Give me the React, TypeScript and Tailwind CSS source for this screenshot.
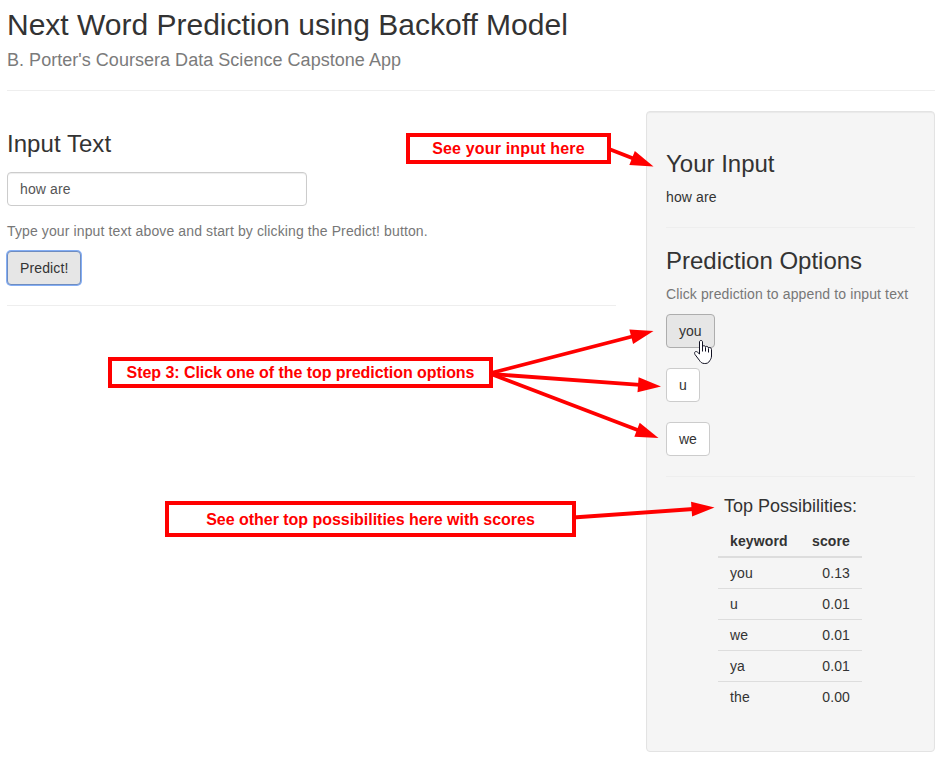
import { useState } from "react";

const rows = [
  ["you", "0.13"],
  ["u", "0.01"],
  ["we", "0.01"],
  ["ya", "0.01"],
  ["the", "0.00"],
];

function PredictionButton({ label, active }: { label: string; active?: boolean }) {
  return (
    <button
      className={
        "block h-[34px] rounded border px-3 text-sm leading-5 tracking-normal text-[#333] " +
        (active ? "border-[#adadad] bg-[#e6e6e6]" : "border-[#ccc] bg-white")
      }
    >
      {label}
    </button>
  );
}

function Arrow({ from, to, head = 23 }: { from: [number, number]; to: [number, number]; head?: number }) {
  const dx = to[0] - from[0];
  const dy = to[1] - from[1];
  const len = Math.hypot(dx, dy);
  const angle = (Math.atan2(dy, dx) * 180) / Math.PI;
  return (
    <g transform={`translate(${from[0]} ${from[1]}) rotate(${angle})`}>
      <path d={`M0 0H${len - head + 2}`} stroke="#f00" strokeWidth="3.8" />
      <path d={`M${len} 0L${len - head} -7.5V7.5Z`} fill="#f00" />
    </g>
  );
}

const callout =
  "absolute flex items-center justify-center border-4 border-[#f00] bg-white font-bold text-[#f00] text-base leading-5 whitespace-nowrap";

export default function App() {
  const [text, setText] = useState("how are");
  return (
    <div className="relative h-[774px] w-[943px] overflow-hidden bg-white pl-[7px] pr-2 pt-2 font-['Liberation_Sans',Arial,sans-serif] text-sm leading-5 tracking-[0.12px] text-[#333]">
      <h2 className="text-[30px] leading-[33px] tracking-normal">Next Word Prediction using Backoff Model</h2>
      <h4 className="mt-[9px] text-lg leading-5 tracking-[0.03px] text-[#7b7b7b]">
        B. Porter's Coursera Data Science Capstone App
      </h4>
      <hr className="mt-5 border-[#eee]" />

      <div className="mt-5 flex gap-[30px]">
        <main className="w-[609px] pt-5">
          <h3 className="text-2xl leading-[26px] tracking-[0.05px]">Input Text</h3>
          <input
            value={text}
            onChange={(e) => setText(e.target.value)}
            className="mt-[15px] block h-[34px] w-[300px] rounded border border-[#ccc] px-3 text-sm tracking-[0.12px] text-[#555] shadow-[inset_0_1px_1px_rgba(0,0,0,0.075)] outline-none"
          />
          <p className="mt-[15px] text-[#777]">
            Type your input text above and start by clicking the Predict! button.
          </p>
          <button className="mt-[10px] block h-[34px] rounded border border-[#6e8cc0] bg-[#e6e6e6] px-3 tracking-[0.12px] text-[#333] shadow-[0_0_0_1px_#84aef5]">
            Predict!
          </button>
          <hr className="mt-5 border-[#eee]" />
        </main>

        <aside className="h-[641px] w-[289px] rounded border border-[#e3e3e3] bg-[#f5f5f5] px-[19px] pt-[39px] shadow-[inset_0_1px_1px_rgba(0,0,0,0.05)]">
          <h3 className="text-2xl leading-[26px] tracking-normal">Your Input</h3>
          <p className="mt-[10px]">{text}</p>
          <hr className="mt-5 border-[#eee]" />
          <h3 className="mt-5 text-2xl leading-[26px] tracking-normal">Prediction Options</h3>
          <p className="mt-[10px] whitespace-nowrap text-[#777]">Click prediction to append to input text</p>
          <div className="mt-[10px] flex flex-col items-start gap-5">
            <PredictionButton label="you" active />
            <PredictionButton label="u" />
            <PredictionButton label="we" />
          </div>
          <hr className="mt-5 border-[#eee]" />
          <h4 className="mt-[19px] text-center text-lg leading-5 tracking-normal">Top Possibilities:</h4>
          <table className="ml-[52px] mt-[9px] w-36 border-collapse">
            <thead>
              <tr className="h-8 border-b-2 border-[#ddd]">
                <th className="px-3 text-left">keyword</th>
                <th className="px-3 text-right">score</th>
              </tr>
            </thead>
            <tbody>
              {rows.map(([word, score]) => (
                <tr key={word} className="h-[31px] border-b border-[#ddd] last:border-b-0">
                  <td className="px-3">{word}</td>
                  <td className="px-3 text-right">{score}</td>
                </tr>
              ))}
            </tbody>
          </table>
        </aside>
      </div>

      <svg className="absolute left-0 top-0" width="943" height="774" viewBox="0 0 943 774">
        <Arrow from={[609, 149]} to={[653.5, 166.5]} />
        <Arrow from={[491, 373]} to={[653.5, 331]} />
        <Arrow from={[491, 374]} to={[661, 386.5]} />
        <Arrow from={[491, 374]} to={[658.5, 438]} />
        <Arrow from={[573, 517.5]} to={[714.5, 507.5]} />
      </svg>
      <div className={callout + " left-[406px] top-[133px] h-[31px] w-[205px] tracking-[0.17px]"}>
        See your input here
      </div>
      <div className={callout + " left-[108px] top-[357px] h-[31px] w-[385px] tracking-[-0.05px]"}>
        Step 3: Click one of the top prediction options
      </div>
      <div className={callout + " left-[165px] top-[501px] h-[36px] w-[411px] pt-0.5 tracking-[-0.03px]"}>
        See other top possibilities here with scores
      </div>

      <svg className="absolute left-[693px] top-[339px]" width="20" height="26" viewBox="0 0 20 26">
        <path
          d="M6.5 15V3C6.5 .9 9.5 .9 9.5 3V8C9.5 6.2 12.5 6.2 12.5 8.3C12.5 6.9 15.5 7 15.5 9.2C15.5 8 18.5 8.2 18.5 10.5V17C18.5 19 17.6 20.5 16.8 21.6C15.6 24.2 13.5 24.6 11.3 24.5C8.6 24.4 7.5 23 6.3 21.2L2 15.5C.7 13 2.8 11.6 4.5 13.2Z"
          fill="#fff"
          stroke="#112"
        />
        <path d="M9.5 7.5V12.5M12.5 8.5V12.5M15.5 9.5V13.5" stroke="#112" />
      </svg>
    </div>
  );
}
